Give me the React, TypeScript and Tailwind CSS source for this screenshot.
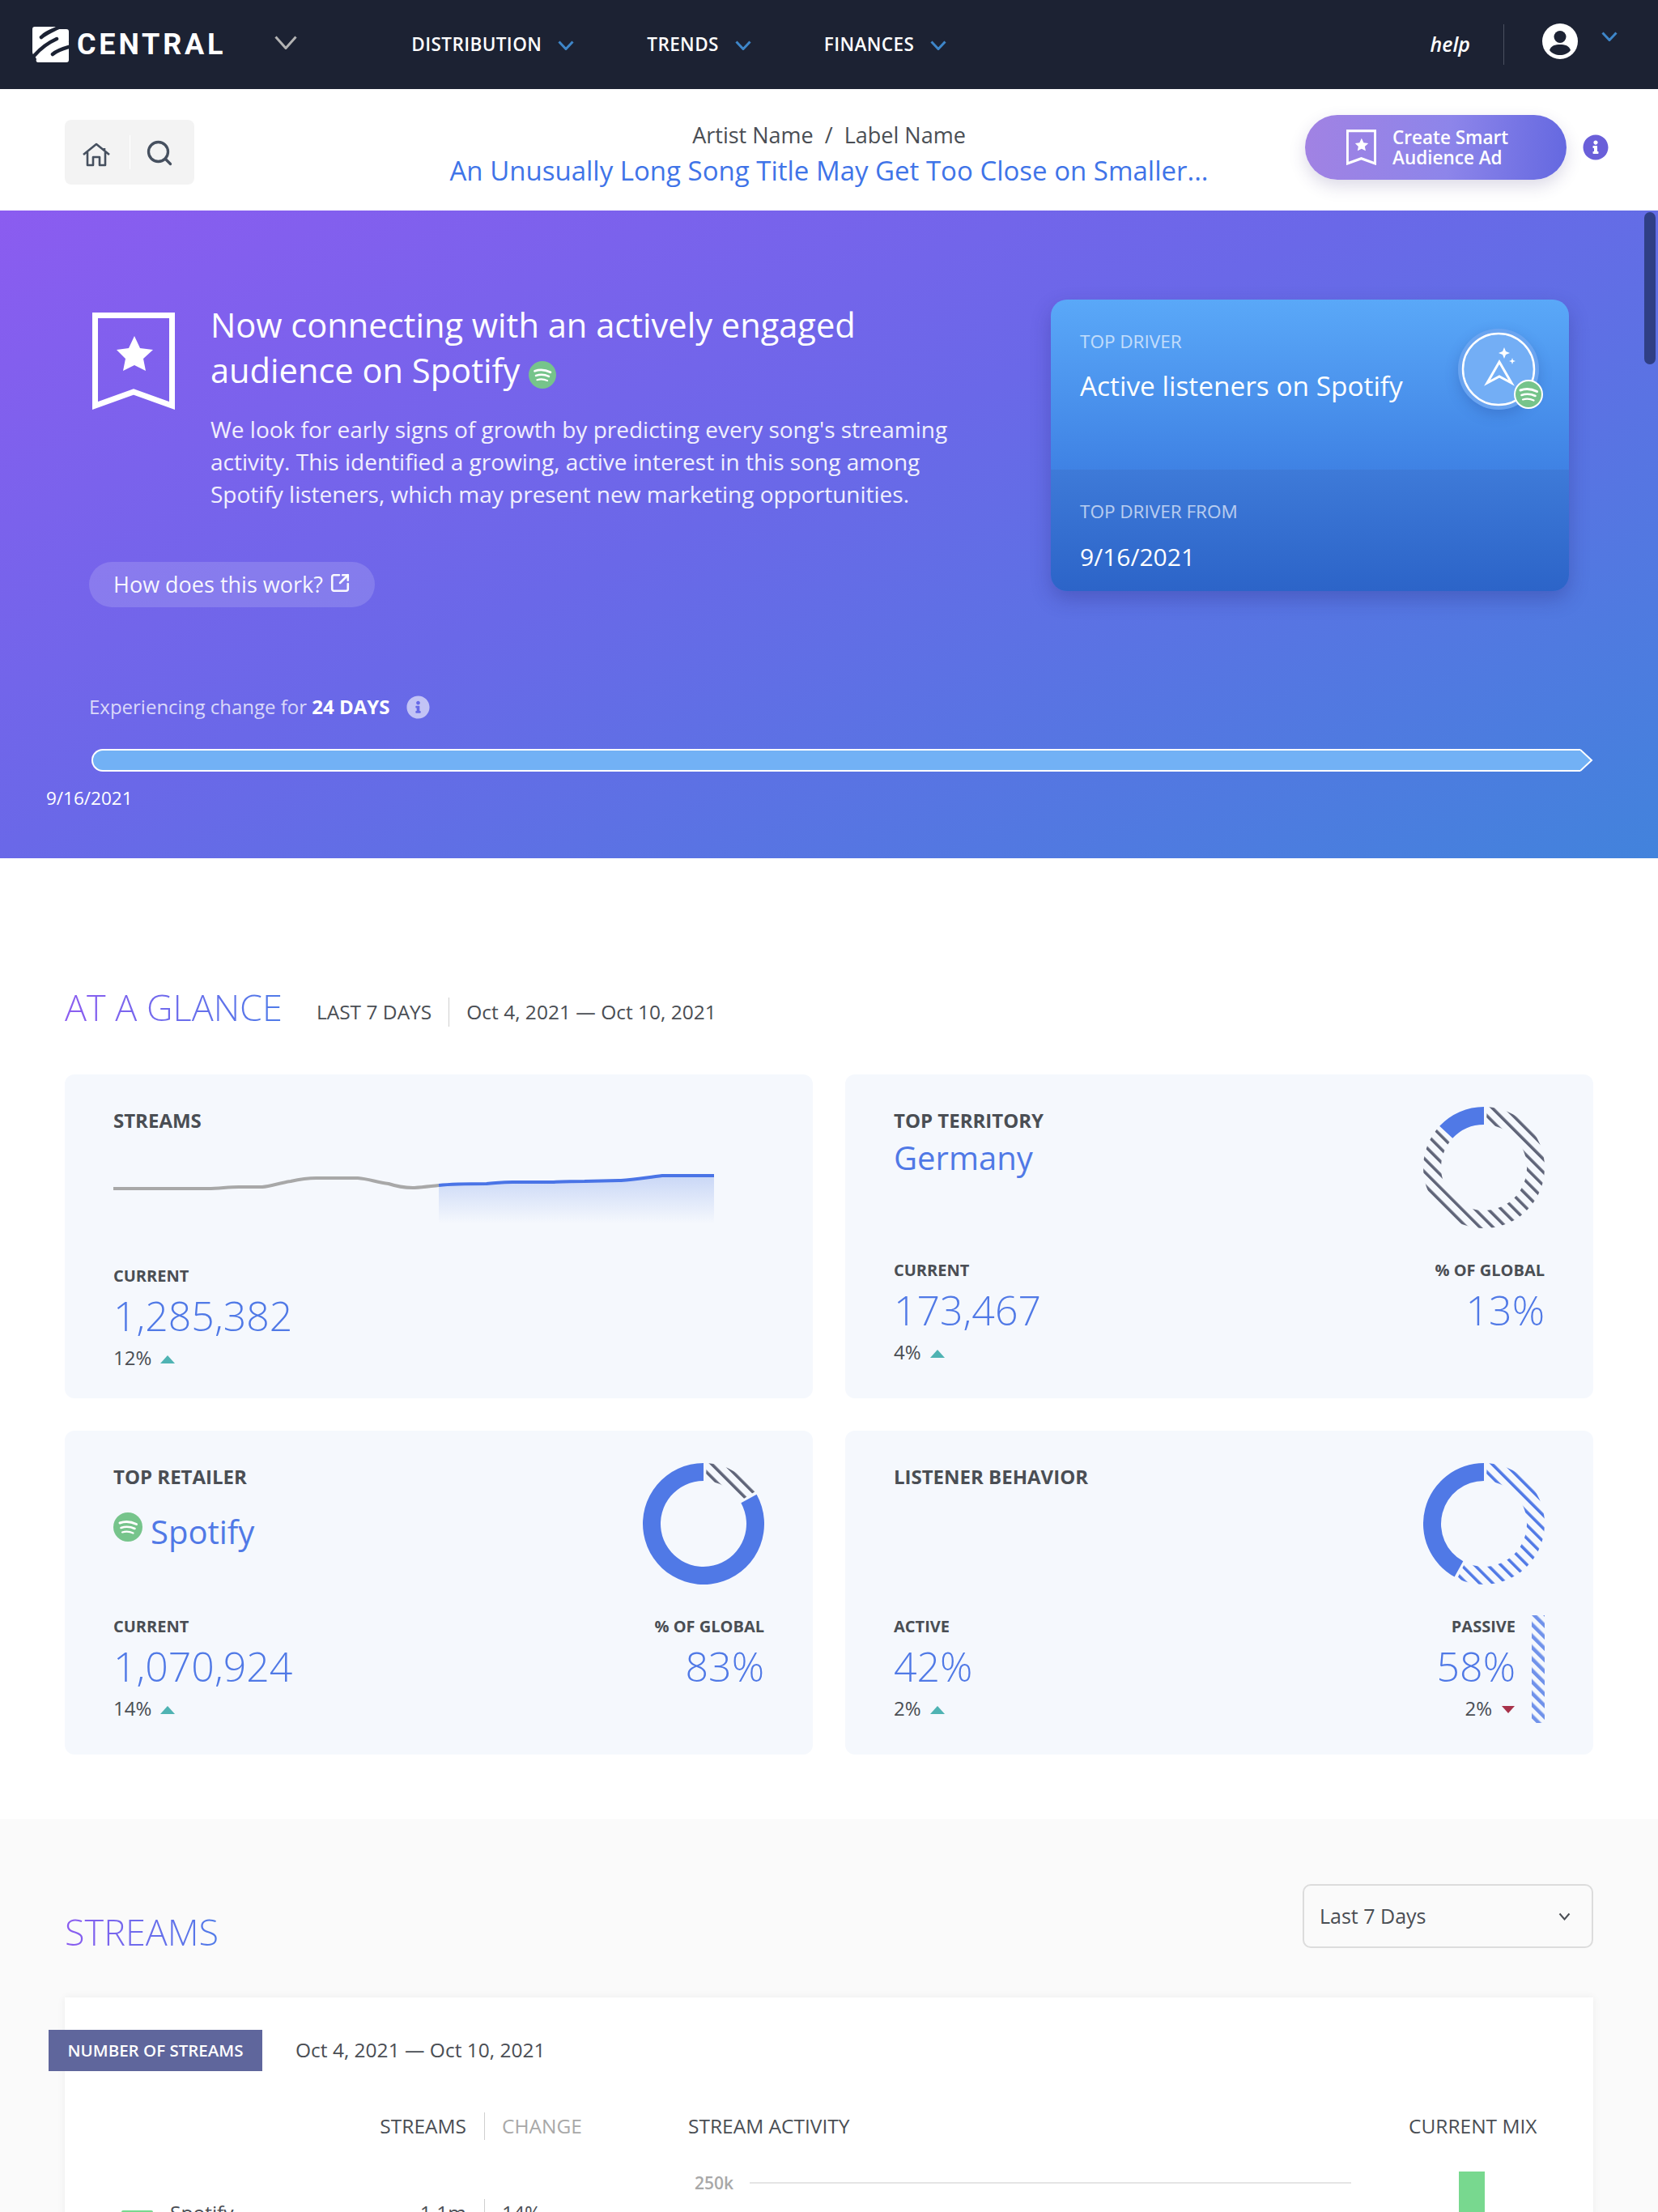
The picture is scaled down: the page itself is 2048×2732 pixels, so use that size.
import { useId } from "react";
import { Search, SquareArrowOutUpRight } from "lucide-react";
import { FaInfoCircle } from "react-icons/fa";

function Chevron({ color = "#3e86c9", w = 20, h = 12, sw = 3 }: { color?: string; w?: number; h?: number; sw?: number }) {
  return (
    <svg width={w} height={h} viewBox={`0 0 ${w} ${h}`} fill="none" className="shrink-0">
      <path d={`M1.5 1.5 L${w / 2} ${h - 1.5} L${w - 1.5} 1.5`} stroke={color} strokeWidth={sw} />
    </svg>
  );
}

function Logo() {
  return (
    <svg width="45" height="44" viewBox="0 0 45 44" className="shrink-0">
      <path
        d="M3 0 H31 L25 2 C18 5 14 7 11 10 L33 3 H42 C44 3 45 4 45 6 V18 L35 21 L45 17 V41 C45 43 44 44 42 44 H7 C5 44 4 42 5 40 L3 36 C1 35 0 33 0 31 V3 C0 1 1 0 3 0 Z"
        fill="#fff"
      />
      <path d="M11 13 C17 8 24 5 32 1" stroke="#1c2233" strokeWidth="4.5" strokeLinecap="round" fill="none" />
      <path d="M3 35 C10 27 19 20 30 15" stroke="#1c2233" strokeWidth="4.5" strokeLinecap="round" fill="none" />
      <path d="M25 34 C31 29 38 27 45 25" stroke="#1c2233" strokeWidth="4.5" strokeLinecap="round" fill="none" />
    </svg>
  );
}

function UserIcon() {
  return (
    <svg width="44" height="44" viewBox="0 0 44 44" className="shrink-0">
      <circle cx="22" cy="22" r="22" fill="#fff" />
      <circle cx="22" cy="16.5" r="7.5" fill="#1c2233" />
      <path d="M9 33 C11 27 16 26 22 26 C28 26 33 27 35 33 C32 37 27 39 22 39 C17 39 12 37 9 33 Z" fill="#1c2233" />
    </svg>
  );
}

function HomeIcon() {
  return (
    <svg width="36" height="30" viewBox="0 0 36 30" fill="none" className="shrink-0">
      <path
        d="M2 15 L18 2 L34 15 M7 12 V28 H14 V18 H22 V28 H29 V12 M28 7 V11"
        stroke="#46505f"
        strokeWidth="2.6"
        strokeLinejoin="round"
      />
    </svg>
  );
}

function Bookmark({ w, h, sw }: { w: number; h: number; sw: number }) {
  return (
    <svg width={w} height={h} viewBox="0 0 102 120" fill="none" className="shrink-0">
      <path d="M3.5 3.5 H98.5 V115 L51 98 L3.5 115 Z" stroke="#fff" strokeWidth={sw} />
      <path
        d="M52 29 L59 44 L75 46 L63 57 L66 72 L52 65 L38 72 L41 57 L30 46 L45 44 Z"
        fill="#fff"
      />
    </svg>
  );
}

function SpotifyIcon({ size = 36, ring = false }: { size?: number; ring?: boolean }) {
  return (
    <svg width={size} height={size} viewBox="0 0 36 36" fill="none" className="inline-block shrink-0">
      <circle cx="18" cy="18" r={ring ? 17 : 18} fill="#76c48b" stroke={ring ? "#fff" : "none"} strokeWidth={ring ? 2 : 0} />
      <path d="M8 13 Q18 9.5 28.5 14.5" stroke="#fff" strokeWidth="3" strokeLinecap="round" />
      <path d="M9.5 19 Q18 16 26.5 20" stroke="#fff" strokeWidth="2.6" strokeLinecap="round" />
      <path d="M11 24.5 Q18 22.5 24.5 25.5" stroke="#fff" strokeWidth="2.2" strokeLinecap="round" />
    </svg>
  );
}

function DriverBadge() {
  return (
    <div className="relative h-[100px] w-[100px] shrink-0">
      <svg width="100" height="100" viewBox="0 0 100 100" fill="none">
        <circle cx="50" cy="50" r="50" fill="#6aa4f0" />
        <circle cx="50" cy="50" r="44" fill="#73aef5" stroke="#fff" strokeWidth="2.5" />
        <path d="M51 41 L36 67 L51 59 L66 67 Z" stroke="#fff" strokeWidth="3" strokeLinejoin="miter" />
        <path d="M57 23 L59 28 L64 30 L59 32 L57 37 L55 32 L50 30 L55 28 Z" fill="#fff" />
        <path d="M67 36 L68 39 L71 40 L68 41 L67 44 L66 41 L63 40 L66 39 Z" fill="#fff" />
      </svg>
      <div className="absolute left-[69px] top-[63px] flex">
        <SpotifyIcon size={36} ring />
      </div>
    </div>
  );
}

function Triangle({ down = false }: { down?: boolean }) {
  return (
    <svg width="18" height="10" viewBox="0 0 18 10" className="ml-[11px] mt-[4px] shrink-0">
      {down ? <path d="M1 0 H17 L9 9 Z" fill="#a8324a" /> : <path d="M9 0 L18 10 H0 Z" fill="#4fb3b3" />}
    </svg>
  );
}

function arcPath(a0: number, a1: number) {
  // angles in degrees, clockwise from 12 o'clock
  const R = 75;
  const r = 53;
  const pt = (rad: number, a: number) => {
    const t = ((a - 90) * Math.PI) / 180;
    return `${(75 + rad * Math.cos(t)).toFixed(2)} ${(75 + rad * Math.sin(t)).toFixed(2)}`;
  };
  const large = a1 - a0 > 180 ? 1 : 0;
  return `M${pt(R, a0)} A${R} ${R} 0 ${large} 1 ${pt(R, a1)} L${pt(r, a1)} A${r} ${r} 0 ${large} 0 ${pt(r, a0)} Z`;
}

function Donut({
  solid,
  hatch,
  hatchColor,
}: {
  solid: [number, number];
  hatch: [number, number];
  hatchColor: string;
}) {
  const id = useId().replace(/:/g, "");
  return (
    <svg width="150" height="150" viewBox="0 0 150 150" className="shrink-0">
      <defs>
        <pattern id={id} width="11.5" height="11.5" patternUnits="userSpaceOnUse" patternTransform="rotate(-45)">
          <rect width="3.6" height="11.5" fill={hatchColor} />
        </pattern>
      </defs>
      <path d={arcPath(solid[0], solid[1])} fill="#5079e6" />
      <path d={arcPath(hatch[0], hatch[1])} fill={`url(#${id})`} />
    </svg>
  );
}

function HatchBar() {
  return (
    <svg width="16" height="133" className="shrink-0">
      <defs>
        <pattern id="barhatch" width="10" height="10" patternUnits="userSpaceOnUse" patternTransform="rotate(-45)">
          <rect width="4.5" height="10" fill="#7092ea" />
        </pattern>
      </defs>
      <rect width="16" height="133" fill="url(#barhatch)" />
    </svg>
  );
}

function Stat({ label, value, delta, down, right }: { label: string; value: string; delta?: string; down?: boolean; right?: boolean }) {
  return (
    <div className={right ? "flex flex-col items-end" : "flex flex-col items-start"}>
      <div className="h-[28px] text-[20px] font-bold leading-[28px] text-[#4a4e54]">{label}</div>
      <div className="mt-[5px] h-[60px] text-[50px] font-light leading-[60px] text-[#5079e6]">{value}</div>
      {delta && (
        <div className="mt-[6px] flex h-[32px] items-center text-[24px] leading-[32px] text-[#4a4e54]">
          {delta}
          <Triangle down={down} />
        </div>
      )}
    </div>
  );
}

function Section({ title, className = "" }: { title: string; className?: string }) {
  return (
    <h2
      className={`h-[64px] bg-[linear-gradient(90deg,#8b5cf0,#4f7be8)] bg-clip-text text-[45px] font-[350] leading-[64px] text-transparent ${className}`}
    >
      {title}
    </h2>
  );
}

export default function App() {
  const navClass = "text-[22.5px] font-semibold tracking-[0.4px] text-white";
  const sparkGray =
    "M0 27 L117 27 C130 27 142 25 155 25 L184 25 C195 24 205 20 219 18 C232 15 240 14 251 14 L302 14 C315 15 325 19 340 21 C352 25 362 26 372 26 C384 25 392 24 402 23";
  const sparkBlue =
    "M402 23 C420 21 440 21 461 21 C475 20 480 19 493 19 L544 19 C555 18 570 18 582 18 L627 17 C645 16 660 13 678 11 L742 11";

  return (
    <div className="h-[2732px] overflow-hidden bg-white font-['Open_Sans',sans-serif] text-[#4a4e54]">
      <nav className="flex h-[110px] items-center bg-[#1c2233] pl-[40px] pr-[50px]">
        <Logo />
        <span className="ml-[10px] font-['Roboto',sans-serif] text-[36px] font-bold leading-none tracking-[3.8px] text-white">CENTRAL</span>
        <div className="ml-[60px] -mt-[6px]">
          <Chevron color="#b3b3b3" w={28} h={17} sw={3} />
        </div>
        <span className={`ml-[141px] ${navClass}`}>DISTRIBUTION</span>
        <div className="ml-[20px] mt-[2px]"><Chevron /></div>
        <span className={`ml-[90px] ${navClass}`}>TRENDS</span>
        <div className="ml-[20px] mt-[2px]"><Chevron /></div>
        <span className={`ml-[90px] ${navClass}`}>FINANCES</span>
        <div className="ml-[20px] mt-[2px]"><Chevron /></div>
        <div className="ml-auto flex items-center">
          <span className="text-[25px] font-semibold italic text-white">help</span>
          <div className="ml-[41px] h-[50px] w-px bg-[#4a5060]" />
          <div className="ml-[47px] -mt-[8px]"><UserIcon /></div>
          <div className="ml-[29px] -mt-[20px]"><Chevron /></div>
        </div>
      </nav>

      <header className="flex h-[150px] items-center bg-white pl-[80px] pr-[61px]">
        <div className="mt-[6px] flex h-[80px] w-[160px] items-center rounded-[8px] bg-[#f3f3f3] pt-[6px]">
          <div className="ml-[21px]"><HomeIcon /></div>
          <div className="ml-[23px] -mt-[6px] h-[42px] w-px bg-white" />
          <Search size={36} strokeWidth={2.2} color="#46505f" className="ml-[18px] -mt-[4px]" />
        </div>
        <div className="mt-[12px] flex-1 pl-[196px] text-center">
          <div className="text-[27px] leading-[38px] text-[#4a4e54]">Artist Name&nbsp; /&nbsp; Label Name</div>
          <div className="mt-[2px] text-[33px] font-medium leading-[46px] text-[#3f74e8]">An Unusually Long Song Title May Get Too Close on Smaller...</div>
        </div>
        <div className="-mt-[6px] flex h-[80px] w-[323px] items-center rounded-full bg-[linear-gradient(95deg,#a182e3,#8d85ea_55%,#6468e0)] pl-[51px] shadow-[0_8px_20px_rgba(60,50,120,0.18)]">
          <Bookmark w={37} h={44} sw={9} />
          <div className="ml-[20px] text-[22.5px] font-semibold leading-[25px] text-white">Create Smart<br />Audience Ad</div>
        </div>
        <FaInfoCircle size={32} color="#6a5fd9" className="ml-[20px] -mt-[6px]" />
      </header>

      <section className="relative bg-[linear-gradient(155deg,#8b5cf0,#6a68e8_45%,#4283dc)] pb-[58px] pt-[110px]">
        <div className="absolute right-[3px] top-[2px] h-[188px] w-[14px] rounded-full bg-[#2f3f85]" />
        <div className="flex items-start pl-[110px] pr-[110px]">
          <div className="w-[1150px]">
            <div className="flex items-start">
              <div className="ml-[4px] mt-[16px]"><Bookmark w={102} h={120} sw={7} /></div>
              <div className="ml-[44px]">
                <h1 className="mt-[3px] text-[41.6px] font-medium leading-[56px] text-white">
                  Now connecting with an actively engaged<br />
                  audience on Spotify <span className="relative top-[1px] inline-block"><SpotifyIcon size={34} /></span>
                </h1>
                <p className="mt-[25px] text-[28px] font-normal leading-[40px] text-white/90">
                  We look for early signs of growth by predicting every song's streaming<br />
                  activity. This identified a growing, active interest in this song among<br />
                  Spotify listeners, which may present new marketing opportunities.
                </p>
              </div>
            </div>
            <div className="mt-[64px] flex h-[56px] w-[353px] items-center rounded-full bg-white/15 pl-[30px] text-[27px] font-medium text-white/95">
              How does this work?
              <SquareArrowOutUpRight size={26} strokeWidth={2.4} className="ml-[8px] -mt-[4px]" />
            </div>
          </div>
          <div className="ml-auto w-[640px] overflow-hidden rounded-[20px] shadow-[0_10px_24px_rgba(40,40,120,0.3)]">
            <div className="relative h-[210px] bg-[linear-gradient(180deg,#5aa8f8,#3f82e4)] pl-[36px] pt-[36px]">
              <div className="text-[22.5px] leading-[32px] text-white/65">TOP DRIVER</div>
              <div className="mt-[15px] text-[33.4px] font-medium leading-[46px] text-white">Active listeners on Spotify</div>
              <div className="absolute left-[503px] top-[36px] rounded-full shadow-[0_6px_16px_rgba(30,60,140,0.25)]"><DriverBadge /></div>
            </div>
            <div className="h-[150px] bg-[linear-gradient(180deg,#3e7ad8,#2c64c8)] pl-[36px] pt-[36px]">
              <div className="text-[22.5px] leading-[32px] text-white/65">TOP DRIVER FROM</div>
              <div className="mt-[19px] text-[30px] leading-[42px] text-white">9/16/2021</div>
            </div>
          </div>
        </div>

        <div className="mt-[106px] flex h-[34px] items-center pl-[110px] text-[24px] text-white/75">
          Experiencing change for&nbsp;<b className="font-bold text-white">24 DAYS</b>
          <FaInfoCircle size={29} className="ml-[21px] text-white/60" />
        </div>
        <div className="ml-[113px] mr-[80px] mt-[35px] flex h-[28px]">
          <div className="flex-1 rounded-l-[14px] border-y-2 border-l-2 border-white bg-[#72b1f5]" />
          <svg width="16" height="28" viewBox="0 0 16 28" className="shrink-0">
            <path d="M0 1 L14 14 L0 27 Z" fill="#72b1f5" />
            <path d="M0 1 L14 14 L0 27" fill="none" stroke="#fff" strokeWidth="2" />
          </svg>
        </div>
        <div className="ml-[57px] mt-[17px] text-[22.5px] leading-[32px] text-white">9/16/2021</div>
      </section>

      <section className="bg-white px-[80px] pb-[80px] pt-[152px]">
        <div className="flex items-center">
          <Section title="AT A GLANCE" />
          <span className="ml-[42px] mt-[12px] text-[24.5px] font-medium text-[#4a4e54]">LAST 7 DAYS</span>
          <div className="ml-[21px] mt-[12px] h-[36px] w-px bg-[#cfcfcf]" />
          <span className="ml-[21px] mt-[12px] text-[24.5px] font-medium text-[#4a4e54]">Oct 4, 2021 — Oct 10, 2021</span>
        </div>

        <div className="mt-[51px] grid grid-cols-2 gap-x-[40px] gap-y-[40px]">
          <div className="h-[400px] rounded-[12px] bg-[#f5f8fd] px-[60px] pt-[41px]">
            <div className="h-[32px] text-[24px] font-bold leading-[32px]">STREAMS</div>
            <svg width="742" height="80" viewBox="0 0 742 80" fill="none" className="mt-[41px] block">
              <defs>
                <linearGradient id="sparkfill" x1="0" y1="0" x2="0" y2="1">
                  <stop offset="0" stopColor="#c9d7f6" />
                  <stop offset="1" stopColor="#f5f8fd" />
                </linearGradient>
              </defs>
              <path d={`${sparkBlue} L742 70 L402 70 Z`} fill="url(#sparkfill)" />
              <path d={sparkGray} stroke="#a8a8a8" strokeWidth="4" />
              <path d={sparkBlue} stroke="#4a74e6" strokeWidth="4" />
            </svg>
            <div className="mt-[41px]"><Stat label="CURRENT" value="1,285,382" delta="12%" /></div>
          </div>

          <div className="h-[400px] rounded-[12px] bg-[#f5f8fd] px-[60px] pt-[40px]">
            <div className="flex justify-between">
              <div>
                <div className="h-[34px] text-[24px] font-bold leading-[34px]">TOP TERRITORY</div>
                <div className="mt-[1px] text-[40px] leading-[56px] text-[#5079e6]">Germany</div>
              </div>
              <Donut solid={[313, 360]} hatch={[3, 310]} hatchColor="#5f6478" />
            </div>
            <div className="mt-[38px] flex justify-between">
              <Stat label="CURRENT" value="173,467" delta="4%" />
              <Stat label="% OF GLOBAL" value="13%" right />
            </div>
          </div>

          <div className="h-[400px] rounded-[12px] bg-[#f5f8fd] px-[60px] pt-[40px]">
            <div className="flex justify-between">
              <div>
                <div className="h-[34px] text-[24px] font-bold leading-[34px]">TOP RETAILER</div>
                <div className="mt-[27px] flex items-start">
                  <SpotifyIcon size={36} />
                  <span className="ml-[10px] -mt-[4px] text-[40px] leading-[56px] text-[#5079e6]">Spotify</span>
                </div>
              </div>
              <Donut solid={[61, 360]} hatch={[3, 58]} hatchColor="#5f6478" />
            </div>
            <div className="mt-[38px] flex justify-between">
              <Stat label="CURRENT" value="1,070,924" delta="14%" />
              <Stat label="% OF GLOBAL" value="83%" right />
            </div>
          </div>

          <div className="h-[400px] rounded-[12px] bg-[#f5f8fd] px-[60px] pt-[40px]">
            <div className="flex justify-between">
              <div className="h-[34px] text-[24px] font-bold leading-[34px]">LISTENER BEHAVIOR</div>
              <Donut solid={[209, 360]} hatch={[3, 206]} hatchColor="#5079e6" />
            </div>
            <div className="mt-[38px] flex justify-between">
              <Stat label="ACTIVE" value="42%" delta="2%" />
              <div className="flex items-start gap-[20px]">
                <Stat label="PASSIVE" value="58%" delta="2%" down right />
                <HatchBar />
              </div>
            </div>
          </div>
        </div>
      </section>

      <section className="bg-[#fafafa] px-[80px] pt-[80px]">
        <div className="flex items-start justify-between">
          <Section title="STREAMS" className="mt-[27px]" />
          <div className="flex h-[79px] w-[359px] items-center justify-between rounded-[10px] border-2 border-[#dcdcdc] bg-[#fafafa] pl-[19px] pr-[26px] text-[25px] text-[#4a4e54]">
            Last 7 Days
            <Chevron color="#4a4e54" w={15} h={10} sw={2} />
          </div>
        </div>

        <div className="mt-[49px] bg-white pt-[40px] shadow-[0_0_10px_rgba(0,0,0,0.06)]">
          <div className="flex items-center">
            <div className="-ml-[20px] flex h-[51px] w-[264px] items-center justify-center bg-[#5f669c] text-[20.5px] font-semibold text-white">NUMBER OF STREAMS</div>
            <span className="ml-[41px] text-[24.5px] font-medium text-[#4a4e54]">Oct 4, 2021 — Oct 10, 2021</span>
          </div>
          <div className="mt-[51px] grid grid-cols-[496px_44px_230px_890px_auto] text-[24.5px] leading-[34px]">
            <div className="text-right">STREAMS</div>
            <div className="mx-auto h-[34px] w-px bg-[#cfcfcf]" />
            <div className="text-[#a8a8a8]">CHANGE</div>
            <div>STREAM ACTIVITY</div>
            <div>CURRENT MIX</div>

            <div className="mt-[34px] flex items-start justify-between pl-[70px] pt-[39px]">
              <div className="flex items-start">
                <div className="mt-[14px] h-[14px] w-[39px] rounded-[2px] bg-[#78d88f]" />
                <span className="ml-[21px]">Spotify</span>
              </div>
              <span>1.1m</span>
            </div>
            <div className="mx-auto mt-[73px] h-[40px] w-px bg-[#cfcfcf]" />
            <div className="mt-[73px]">14%</div>
            <div className="mt-[34px] flex items-start pl-[8px] pr-[71px]">
              <span className="mt-[2px] text-[21px] font-semibold text-[#a8a8a8]">250k</span>
              <div className="ml-[20px] mt-[18px] h-[2px] flex-1 bg-[#e5e5e5]" />
            </div>
            <div className="mt-[39px] pl-[62px]">
              <div className="h-[100px] w-[32px] bg-[#78d88f]" />
            </div>
          </div>
        </div>
      </section>
    </div>
  );
}
